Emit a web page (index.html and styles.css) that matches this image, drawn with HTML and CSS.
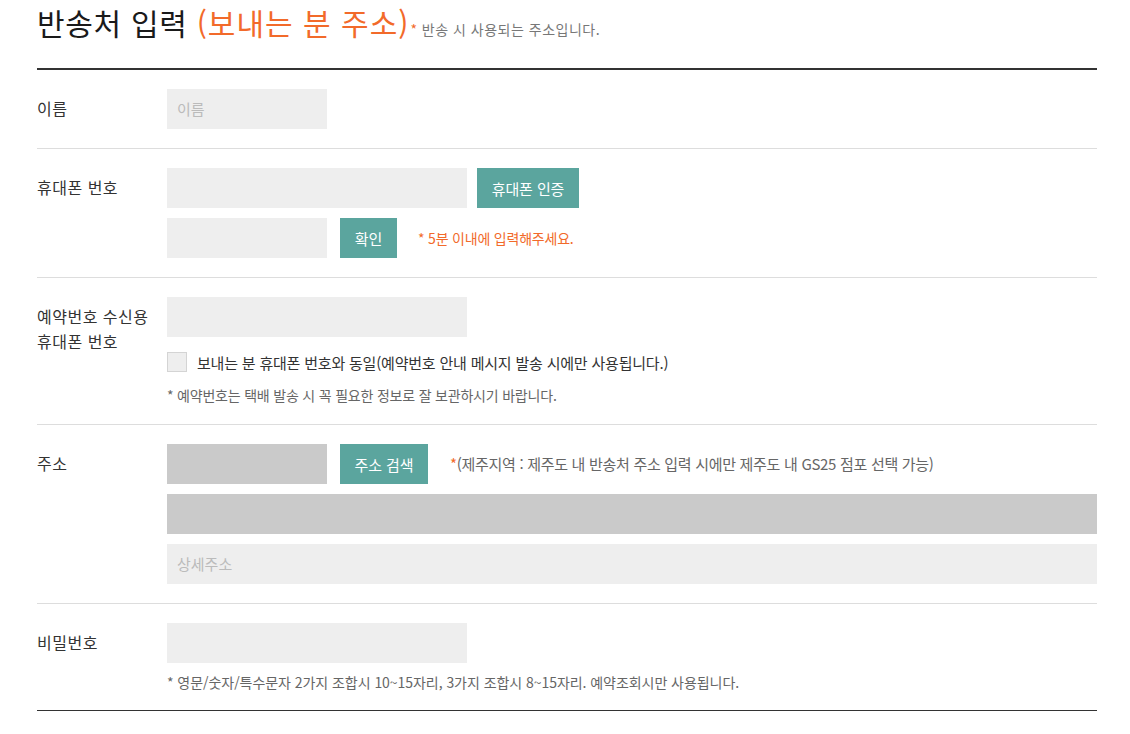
FILE: index.html
```html
<!DOCTYPE html>
<html lang="ko">
<head>
<meta charset="utf-8">
<link rel="stylesheet" href="styles.css">
</head>
<body>
<div class="wrap">
  <h2 class="title">반송처 입력 <span class="accent">(보내는 분 주소)</span><span class="sub"><span class="star">*</span> 반송 시 사용되는 주소입니다.</span></h2>
  <div class="form">
    <div class="row">
      <div class="label">이름</div>
      <div class="field">
        <div class="line"><div class="input w160 ph">이름</div></div>
      </div>
    </div>
    <div class="row">
      <div class="label">휴대폰 번호</div>
      <div class="field">
        <div class="line"><div class="input w300"></div><button class="btn b1">휴대폰 인증</button></div>
        <div class="line"><div class="input w160"></div><button class="btn b2">확인</button><span class="note orange">* 5분 이내에 입력해주세요.</span></div>
      </div>
    </div>
    <div class="row">
      <div class="label">예약번호 수신용<br>휴대폰 번호</div>
      <div class="field">
        <div class="line"><div class="input w300"></div></div>
        <div class="check"><span class="box"></span><span>보내는 분 휴대폰 번호와 동일(예약번호 안내 메시지 발송 시에만 사용됩니다.)</span></div>
        <div class="note gray n3">* 예약번호는 택배 발송 시 꼭 필요한 정보로 잘 보관하시기 바랍니다.</div>
      </div>
    </div>
    <div class="row">
      <div class="label">주소</div>
      <div class="field">
        <div class="line"><div class="input w160 dis"></div><button class="btn b3">주소 검색</button><span class="note gray n4"><span class="star">*</span>(제주지역 : 제주도 내 반송처 주소 입력 시에만 제주도 내 GS25 점포 선택 가능)</span></div>
        <div class="line"><div class="input full dis"></div></div>
        <div class="line"><div class="input full ph">상세주소</div></div>
      </div>
    </div>
    <div class="row last">
      <div class="label">비밀번호</div>
      <div class="field">
        <div class="line"><div class="input w300"></div></div>
        <div class="note gray n5">* 영문/숫자/특수문자 2가지 조합시 10~15자리, 3가지 조합시 8~15자리. 예약조회시만 사용됩니다.</div>
      </div>
    </div>
  </div>
</div>
</body>
</html>
```

FILE: styles.css
```css
* { box-sizing: border-box; }
html, body { margin: 0; padding: 0; background: #fff; }
body {
  font-family: "Noto Sans CJK KR", "Noto Sans", sans-serif;
  color: #333;
}
.wrap { width: 1060px; margin-left: 37px; }
.title {
  margin: 0;
  padding-top: 2px;
  height: 68px;
  font-size: 30px;
  font-weight: 400;
  line-height: 40px;
  color: #1a1a1a;
  letter-spacing: 0.7px;
}
.title .accent { color: #f26a2a; letter-spacing: 1px; }
.title .sub { font-size: 14px; color: #777; letter-spacing: 0.5px; margin-left: 1px; }
.star { color: #f26a2a; }
.form { border-top: 2px solid #333; border-bottom: 1px solid #333; }
.row {
  display: flex;
  padding: 19px 0;
  border-bottom: 1px solid #ddd;
}
.row.last { border-bottom: none; padding-bottom: 18px; }
.label {
  width: 130px;
  flex: none;
  font-size: 16px;
  line-height: 25px;
  padding-top: 7px;
  letter-spacing: 0.5px;
  color: #333;
}
.field { flex: 1; display: flex; flex-direction: column; gap: 10px; }
.line { display: flex; align-items: center; }
.input {
  height: 40px;
  background: #eee;
  font-size: 15px;
  line-height: 40px;
  padding-left: 10px;
  color: #bbb;
  letter-spacing: 0;
}
.input.dis { background: #cacaca; }
.w160 { width: 160px; }
.w300 { width: 300px; }
.full { width: 100%; }
.btn {
  height: 40px;
  border: none;
  background: #5ba59e;
  color: #fff;
  font-family: inherit;
  font-size: 15px;
  letter-spacing: -0.1px;
  padding: 0;
}
.b1 { width: 102px; margin-left: 10px; }
.b2 { width: 57px; margin-left: 13px; }
.b3 { width: 88px; margin-left: 13px; }
.note { font-size: 14px; letter-spacing: -0.2px; line-height: 20px; }
.orange { color: #f26a2a; margin-left: 21px; }
.gray { color: #666; }
.n4 { font-size: 15px; margin-left: 22px; letter-spacing: -0.3px; }
.check {
  display: flex;
  align-items: center;
  margin-top: 5px;
  font-size: 15px;
  letter-spacing: -0.2px;
  color: #333;
  height: 20px;
}
.box {
  width: 20px;
  height: 20px;
  background: #eee;
  border: 1px solid #d4d4d4;
  margin-right: 10px;
}
.n3 { margin-top: 3px; }
.n5 { margin-top: -1px; letter-spacing: -0.05px; }
```
